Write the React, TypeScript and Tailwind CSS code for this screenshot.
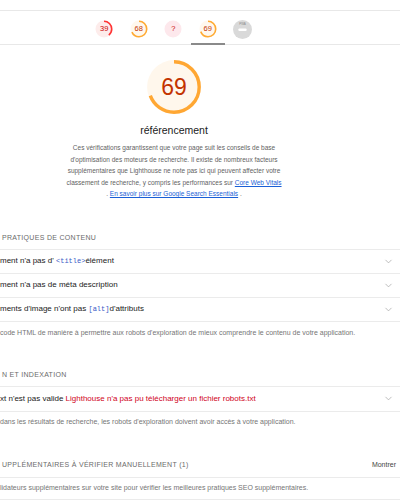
import { ChevronDown } from "lucide-react";

type gauge = {
  score?: number;
  label: string;
  color: string;
  bg: string;
  text: string;
  active?: boolean;
}[];

const gauges: gauge = [
  { score: 39, label: "39", color: "#ff3333", bg: "#fdeceb", text: "#cc0000" },
  { score: 68, label: "68", color: "#ffaa33", bg: "#fff8ee", text: "#c33300" },
  { label: "?", color: "#ff3333", bg: "#fde8ec", text: "#cc0000" },
  { score: 69, label: "69", color: "#ffaa33", bg: "#fff8ee", text: "#c33300", active: true },
];

// arc drawn from the top, clockwise
const Ring = ({ size, r, stroke, score, color, bg }: { size: number; r: number; stroke: number; score?: number; color: string; bg: string }) => {
  const c = 2 * Math.PI * r;
  const half = size / 2;
  return (
    <svg width={size} height={size} className="absolute inset-0">
      <circle cx={half} cy={half} r={r + stroke / 2} fill={bg} />
      {score !== undefined && (
        <circle
          cx={half}
          cy={half}
          r={r}
          fill="none"
          stroke={color}
          strokeWidth={stroke}
          strokeDasharray={`${(c * score) / 100} ${c}`}
          transform={`rotate(-90 ${half} ${half})`}
        />
      )}
    </svg>
  );
};

const Row = ({ children }: { children: React.ReactNode }) => (
  <div className="flex h-[24px] items-center justify-between border-t border-[#ebebeb] pr-[6px] text-[8px] text-[#212121]">
    <div className="whitespace-nowrap">{children}</div>
    <ChevronDown size={11} strokeWidth={1.5} className="text-[#a0a0a0]" />
  </div>
);

const Code = ({ children }: { children: React.ReactNode }) => (
  <span className="font-['Liberation_Mono',monospace] text-[7px] text-[#3a5bc7]">{children}</span>
);

const GroupTitle = ({ children, right }: { children: React.ReactNode; right?: string }) => (
  <div className="flex items-center justify-between pl-[2px] pr-[4px] text-[7px] leading-[10px] tracking-[0.3px] text-[#6b6b6b]">
    <span className="whitespace-nowrap">{children}</span>
    {right && <span className="tracking-normal text-[#444]">{right}</span>}
  </div>
);

const Desc = ({ children }: { children: React.ReactNode }) => (
  <div className="whitespace-nowrap text-[7px] leading-[10px] text-[#757575]">{children}</div>
);

export default function App() {
  return (
    <div className="h-[500px] w-[400px] overflow-hidden bg-white font-['Liberation_Sans',Arial,sans-serif]">
      <div className="h-[10px]" />

      {/* sticky score header */}
      <div className="flex h-[35px] border-y border-[#e8e8e8] pl-[87px]">
        {gauges.map((g) => (
          <div key={g.label} className="relative flex h-full w-[34.5px] items-center justify-center pt-[3px]">
            <div className="relative flex h-[18px] w-[18px] items-center justify-center">
              <Ring size={18} r={7.7} stroke={1.6} score={g.score} color={g.color} bg={g.bg} />
              <span className="relative text-[7.5px] leading-none" style={{ color: g.text }}>
                {g.label}
              </span>
            </div>
            {g.active && <span className="absolute -bottom-px left-0 right-0 h-[2px] bg-[#8a8a8a]" />}
          </div>
        ))}
        <div className="flex h-full w-[34.5px] items-center justify-center pt-[3px]">
          <svg width="19" height="19" viewBox="0 0 19 19">
            <circle cx="9.5" cy="9.5" r="9.5" fill="#d9d9d9" />
            <text x="9.5" y="5.2" textAnchor="middle" fontSize="3" fill="#8c8c8c" fontFamily="Liberation Sans, Arial, sans-serif">
              PWA
            </text>
            <rect x="5.3" y="8.6" width="8.4" height="2.4" rx="1.2" fill="#ffffff" />
          </svg>
        </div>
      </div>

      {/* category score */}
      <div className="flex w-[348px] flex-col items-center text-center">
        <div className="relative mt-[15px] flex h-[54px] w-[54px] items-center justify-center">
          <Ring size={54} r={25.2} stroke={3.4} score={69} color="#ffa733" bg="#fff7ec" />
          <span className="relative text-[23px] leading-none text-[#c33300]">69</span>
        </div>
        <div className="mt-[9px] text-[10.5px] leading-[14px] text-[#212121]">référencement</div>
        <div className="mt-[5px] whitespace-nowrap text-[6.5px] leading-[11.5px] text-[#5f5f5f]">
          <div>Ces vérifications garantissent que votre page suit les conseils de base</div>
          <div>d'optimisation des moteurs de recherche. Il existe de nombreux facteurs</div>
          <div>supplémentaires que Lighthouse ne note pas ici qui peuvent affecter votre</div>
          <div>
            classement de recherche, y compris les performances sur{" "}
            <a className="text-[#1a5fd6] underline">Core Web Vitals</a>
          </div>
          <div>
            . <a className="text-[#1a5fd6] underline">En savoir plus sur Google Search Essentials</a> .
          </div>
        </div>
      </div>

      {/* content best practices */}
      <div className="mt-[33px]">
        <GroupTitle>PRATIQUES DE CONTENU</GroupTitle>
        <div className="mt-[6px] border-b border-[#ebebeb]">
          <Row>
            ment n'a pas d' <Code>&lt;title&gt;</Code>élément
          </Row>
          <Row>ment n'a pas de méta description</Row>
          <Row>
            ments d'image n'ont pas <Code>[alt]</Code>d'attributs
          </Row>
        </div>
        <div className="pt-[6px]">
          <Desc>code HTML de manière à permettre aux robots d'exploration de mieux comprendre le contenu de votre application.</Desc>
        </div>
      </div>

      {/* crawling and indexing */}
      <div className="mt-[32px]">
        <GroupTitle>N ET INDEXATION</GroupTitle>
        <div className="mt-[6px] border-b border-[#ebebeb] [&>div]:h-[25px]">
          <Row>
            xt n'est pas valide <span className="text-[#d0021b]">Lighthouse n'a pas pu télécharger un fichier robots.txt</span>
          </Row>
        </div>
        <div className="pt-[5px]">
          <Desc>dans les résultats de recherche, les robots d'exploration doivent avoir accès à votre application.</Desc>
        </div>
      </div>

      {/* manual checks */}
      <div className="mt-[33px]">
        <GroupTitle right="Montrer">UPPLÉMENTAIRES À VÉRIFIER MANUELLEMENT (1)</GroupTitle>
        <div className="mt-[7px] border-y border-[#ebebeb] pb-[6px] pt-[5px]">
          <Desc>lidateurs supplémentaires sur votre site pour vérifier les meilleures pratiques SEO supplémentaires.</Desc>
        </div>
      </div>
    </div>
  );
}
